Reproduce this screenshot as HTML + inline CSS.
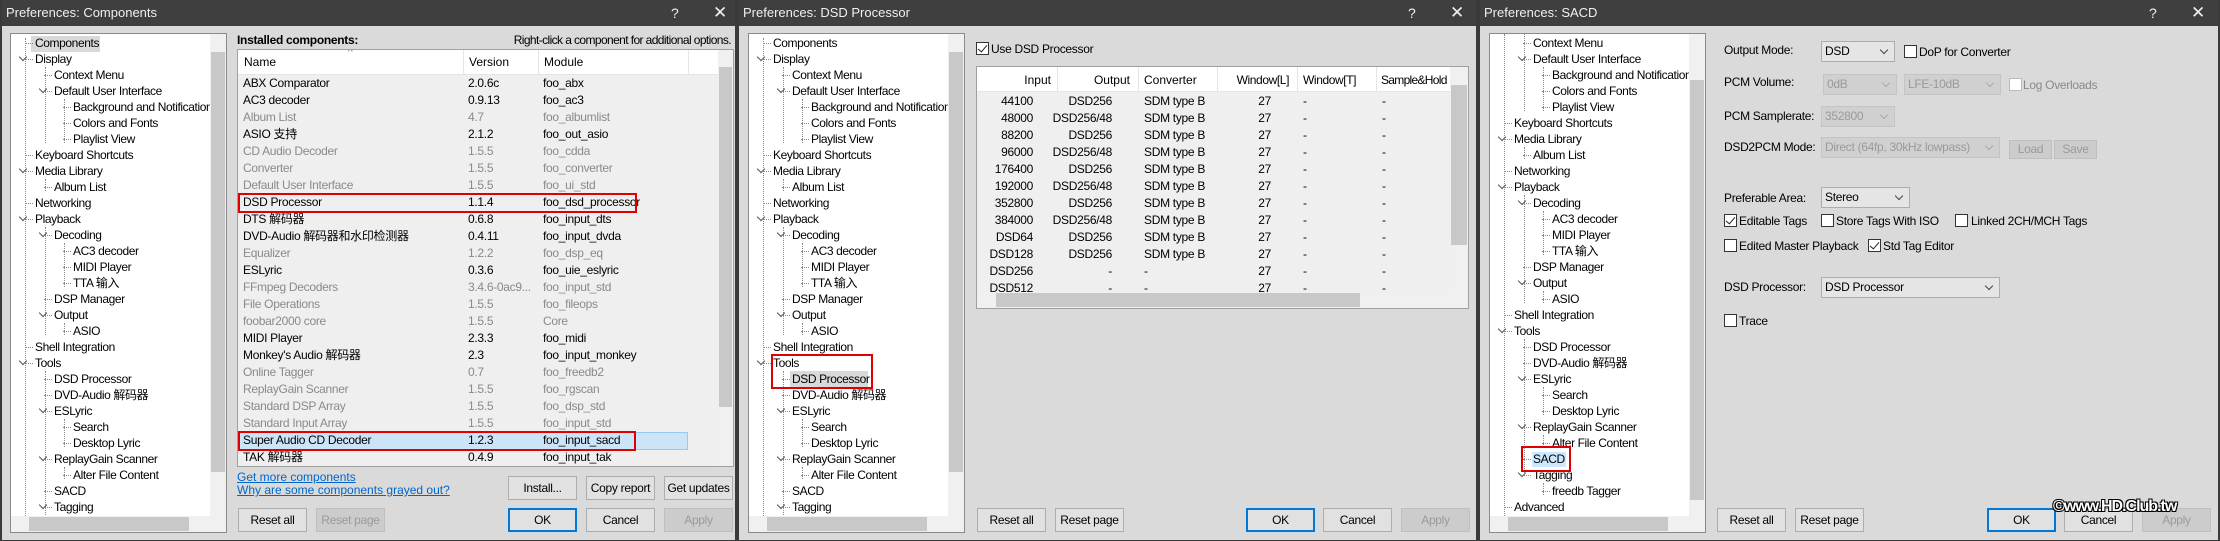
<!DOCTYPE html>
<html><head><meta charset="utf-8"><style>
*{margin:0;padding:0;box-sizing:border-box}
body{width:2220px;height:541px;background:#2b2b2b;position:relative;overflow:hidden;font-family:"Liberation Sans","Noto Sans CJK SC",sans-serif;font-size:12px;color:#000}
.dlg{position:absolute;top:0;height:541px;background:#dadada;overflow:hidden;border-left:2px solid #3a3a3a;border-right:2px solid #3a3a3a;border-bottom:1px solid #3a3a3a}
.tb{position:absolute;left:0;right:0;top:0;height:26px;background:#3f3f3f;color:#f0f0f0;font-size:13px;line-height:26px;padding-left:4px}
.tb .q{position:absolute;top:0;font-size:14px}
.tb .x{position:absolute;top:0;font-size:17px}
.a{position:absolute;white-space:nowrap}
.tree{position:absolute;top:33px;width:217px;height:500px;background:#fff;border:1px solid #8a8a8a;overflow:hidden}
.t{position:absolute;height:16px;line-height:16px;white-space:nowrap;letter-spacing:-.4px}
.t::before{content:"";position:absolute;left:-10px;top:8px;width:8px;border-top:1px dotted #888}
.c{position:absolute;width:6px;height:6px;border-right:1.5px solid #555;border-bottom:1.5px solid #555;transform:rotate(45deg)}
.vl{position:absolute;width:0;border-left:1px dotted #888}
.vs{position:absolute;right:0;top:0;width:16px;height:484px;background:#f0f0f0}
.vs i{position:absolute;left:1px;right:1px;background:#c8c8c8}
.hs{position:absolute;left:0;bottom:0;width:216px;height:16px;background:#f0f0f0}
.hs i{position:absolute;top:1px;bottom:1px;background:#c8c8c8}
.btn{position:absolute;height:24px;background:#e1e1e1;border:1px solid #adadad;text-align:center;line-height:22px;font-size:12px;letter-spacing:-.3px}
.dis{background:#cccccc;border-color:#bfbfbf;color:#9a9a9a}
.ok{border:2px solid #0078d7;line-height:20px}
.list{position:absolute;background:#efefef;border:1px solid #a0a0a0;overflow:hidden}
.hd{position:absolute;left:0;top:0;height:25px;background:#fff;border-bottom:1px solid #e5e5e5}
.sep{position:absolute;top:0;height:25px;border-left:1px solid #e5e5e5}
.r{position:absolute;left:0;height:17px;line-height:17px;white-space:nowrap;letter-spacing:-.3px}
.g{color:#8a8a8a}
.cb{position:absolute;width:13px;height:13px;border:1px solid #333;background:#fff}
.cb.k::after{content:"";position:absolute;left:3px;top:0px;width:4px;height:8px;border-right:1.5px solid #222;border-bottom:1.5px solid #222;transform:rotate(40deg)}
.cmb{position:absolute;height:21px;background:#e5e5e5;border:1px solid #adadad;line-height:19px;padding-left:3px;letter-spacing:-.3px}
.cmb::after{content:"";position:absolute;right:7px;top:5px;width:5px;height:5px;border-right:1px solid #444;border-bottom:1px solid #444;transform:rotate(45deg)}
.cmb.d{background:#d0d0d0;border-color:#c4c4c4;color:#9a9a9a}
.cmb.d::after{border-color:#aaa}
.lnk{color:#0066cc;text-decoration:underline}
</style></head><body>

<!-- ================= DIALOG 1 ================= -->
<div class="dlg" style="left:0;width:737px">
<div class="tb">Preferences: Components<span class="q" style="left:669px">?</span><span class="x" style="left:711px">✕</span></div>
<div class="tree" style="left:8px">
 <div class="vl" style="left:14px;top:4px;height:480px"></div>
 <div class="vl" style="left:34px;top:33px;height:76px"></div>
 <div class="vl" style="left:34px;top:145px;height:12px"></div>
 <div class="vl" style="left:34px;top:193px;height:108px"></div>
 <div class="vl" style="left:34px;top:337px;height:150px"></div>
 <div class="vl" style="left:53px;top:65px;height:44px"></div>
 <div class="vl" style="left:53px;top:209px;height:44px"></div>
 <div class="vl" style="left:53px;top:289px;height:12px"></div>
 <div class="vl" style="left:53px;top:385px;height:28px"></div>
 <div class="vl" style="left:53px;top:433px;height:12px"></div>
 <div style="position:absolute;left:20px;top:2px;width:69px;height:16px;background:#d9d9d9"></div>
 <div class="t" style="top:1px;left:24px">Components</div>
 <div class="c" style="left:9px;top:20px"></div><div class="t" style="top:17px;left:24px">Display</div>
 <div class="t" style="top:33px;left:43px">Context Menu</div>
 <div class="c" style="left:29px;top:52px"></div><div class="t" style="top:49px;left:43px">Default User Interface</div>
 <div class="t" style="top:65px;left:62px">Background and Notifications</div>
 <div class="t" style="top:81px;left:62px">Colors and Fonts</div>
 <div class="t" style="top:97px;left:62px">Playlist View</div>
 <div class="t" style="top:113px;left:24px">Keyboard Shortcuts</div>
 <div class="c" style="left:9px;top:132px"></div><div class="t" style="top:129px;left:24px">Media Library</div>
 <div class="t" style="top:145px;left:43px">Album List</div>
 <div class="t" style="top:161px;left:24px">Networking</div>
 <div class="c" style="left:9px;top:180px"></div><div class="t" style="top:177px;left:24px">Playback</div>
 <div class="c" style="left:29px;top:196px"></div><div class="t" style="top:193px;left:43px">Decoding</div>
 <div class="t" style="top:209px;left:62px">AC3 decoder</div>
 <div class="t" style="top:225px;left:62px">MIDI Player</div>
 <div class="t" style="top:241px;left:62px">TTA 输入</div>
 <div class="t" style="top:257px;left:43px">DSP Manager</div>
 <div class="c" style="left:29px;top:276px"></div><div class="t" style="top:273px;left:43px">Output</div>
 <div class="t" style="top:289px;left:62px">ASIO</div>
 <div class="t" style="top:305px;left:24px">Shell Integration</div>
 <div class="c" style="left:9px;top:324px"></div><div class="t" style="top:321px;left:24px">Tools</div>
 <div class="t" style="top:337px;left:43px">DSD Processor</div>
 <div class="t" style="top:353px;left:43px">DVD-Audio 解码器</div>
 <div class="c" style="left:29px;top:372px"></div><div class="t" style="top:369px;left:43px">ESLyric</div>
 <div class="t" style="top:385px;left:62px">Search</div>
 <div class="t" style="top:401px;left:62px">Desktop Lyric</div>
 <div class="c" style="left:29px;top:420px"></div><div class="t" style="top:417px;left:43px">ReplayGain Scanner</div>
 <div class="t" style="top:433px;left:62px">Alter File Content</div>
 <div class="t" style="top:449px;left:43px">SACD</div>
 <div class="c" style="left:29px;top:468px"></div><div class="t" style="top:465px;left:43px">Tagging</div>
 <div class="vs"><i style="top:18px;height:420px"></i></div>
 <div class="hs"><i style="left:18px;width:160px"></i></div>
</div>

<div class="a" style="left:235px;top:33px;font-weight:bold;letter-spacing:-.3px">Installed components:</div>
<div class="a" style="right:4px;top:33px;letter-spacing:-.6px">Right-click a component for additional options.</div>

<div class="list" style="left:235px;top:49px;width:497px;height:418px">
 <div class="hd" style="width:481px"></div>
 <div class="sep" style="left:225px"></div><div class="sep" style="left:300px"></div><div class="sep" style="left:450px"></div>
 <div class="a" style="left:6px;top:5px">Name</div>
 <div class="a" style="left:110px;top:-3px;font-size:10px;color:#666">^</div>
 <div class="a" style="left:231px;top:5px">Version</div>
 <div class="a" style="left:306px;top:5px">Module</div>
 <div style="position:absolute;left:0;top:382px;width:450px;height:18px;background:#cce4f7;border:1px solid #99c9ef"></div>
 <div style="position:absolute;left:0;top:25px;width:481px;font-size:12px">
  <div class="r" style="top:0"><span class="a" style="left:5px">ABX Comparator</span><span class="a" style="left:230px">2.0.6c</span><span class="a" style="left:305px">foo_abx</span></div>
  <div class="r" style="top:17px"><span class="a" style="left:5px">AC3 decoder</span><span class="a" style="left:230px">0.9.13</span><span class="a" style="left:305px">foo_ac3</span></div>
  <div class="r g" style="top:34px"><span class="a" style="left:5px">Album List</span><span class="a" style="left:230px">4.7</span><span class="a" style="left:305px">foo_albumlist</span></div>
  <div class="r" style="top:51px"><span class="a" style="left:5px">ASIO 支持</span><span class="a" style="left:230px">2.1.2</span><span class="a" style="left:305px">foo_out_asio</span></div>
  <div class="r g" style="top:68px"><span class="a" style="left:5px">CD Audio Decoder</span><span class="a" style="left:230px">1.5.5</span><span class="a" style="left:305px">foo_cdda</span></div>
  <div class="r g" style="top:85px"><span class="a" style="left:5px">Converter</span><span class="a" style="left:230px">1.5.5</span><span class="a" style="left:305px">foo_converter</span></div>
  <div class="r g" style="top:102px"><span class="a" style="left:5px">Default User Interface</span><span class="a" style="left:230px">1.5.5</span><span class="a" style="left:305px">foo_ui_std</span></div>
  <div class="r" style="top:119px"><span class="a" style="left:5px">DSD Processor</span><span class="a" style="left:230px">1.1.4</span><span class="a" style="left:305px">foo_dsd_processor</span></div>
  <div class="r" style="top:136px"><span class="a" style="left:5px">DTS 解码器</span><span class="a" style="left:230px">0.6.8</span><span class="a" style="left:305px">foo_input_dts</span></div>
  <div class="r" style="top:153px"><span class="a" style="left:5px">DVD-Audio 解码器和水印检测器</span><span class="a" style="left:230px">0.4.11</span><span class="a" style="left:305px">foo_input_dvda</span></div>
  <div class="r g" style="top:170px"><span class="a" style="left:5px">Equalizer</span><span class="a" style="left:230px">1.2.2</span><span class="a" style="left:305px">foo_dsp_eq</span></div>
  <div class="r" style="top:187px"><span class="a" style="left:5px">ESLyric</span><span class="a" style="left:230px">0.3.6</span><span class="a" style="left:305px">foo_uie_eslyric</span></div>
  <div class="r g" style="top:204px"><span class="a" style="left:5px">FFmpeg Decoders</span><span class="a" style="left:230px">3.4.6-0ac9...</span><span class="a" style="left:305px">foo_input_std</span></div>
  <div class="r g" style="top:221px"><span class="a" style="left:5px">File Operations</span><span class="a" style="left:230px">1.5.5</span><span class="a" style="left:305px">foo_fileops</span></div>
  <div class="r g" style="top:238px"><span class="a" style="left:5px">foobar2000 core</span><span class="a" style="left:230px">1.5.5</span><span class="a" style="left:305px">Core</span></div>
  <div class="r" style="top:255px"><span class="a" style="left:5px">MIDI Player</span><span class="a" style="left:230px">2.3.3</span><span class="a" style="left:305px">foo_midi</span></div>
  <div class="r" style="top:272px"><span class="a" style="left:5px">Monkey's Audio 解码器</span><span class="a" style="left:230px">2.3</span><span class="a" style="left:305px">foo_input_monkey</span></div>
  <div class="r g" style="top:289px"><span class="a" style="left:5px">Online Tagger</span><span class="a" style="left:230px">0.7</span><span class="a" style="left:305px">foo_freedb2</span></div>
  <div class="r g" style="top:306px"><span class="a" style="left:5px">ReplayGain Scanner</span><span class="a" style="left:230px">1.5.5</span><span class="a" style="left:305px">foo_rgscan</span></div>
  <div class="r g" style="top:323px"><span class="a" style="left:5px">Standard DSP Array</span><span class="a" style="left:230px">1.5.5</span><span class="a" style="left:305px">foo_dsp_std</span></div>
  <div class="r g" style="top:340px"><span class="a" style="left:5px">Standard Input Array</span><span class="a" style="left:230px">1.5.5</span><span class="a" style="left:305px">foo_input_std</span></div>
  <div class="r" style="top:357px"><span class="a" style="left:5px">Super Audio CD Decoder</span><span class="a" style="left:230px">1.2.3</span><span class="a" style="left:305px">foo_input_sacd</span></div>
  <div class="r" style="top:374px"><span class="a" style="left:5px">TAK 解码器</span><span class="a" style="left:230px">0.4.9</span><span class="a" style="left:305px">foo_input_tak</span></div>
 </div>
 <div style="position:absolute;right:0;top:0;width:15px;height:416px;background:#f0f0f0"><i style="position:absolute;left:1px;right:1px;top:17px;height:340px;background:#c8c8c8"></i></div>
</div>
<div style="position:absolute;left:236px;top:193px;width:399px;height:20px;border:2px solid #e00000"></div>
<div style="position:absolute;left:236px;top:431px;width:398px;height:20px;border:2px solid #e00000"></div>

<div class="a lnk" style="left:235px;top:470px">Get more components</div>
<div class="a lnk" style="left:235px;top:483px">Why are some components grayed out?</div>
<div class="btn" style="left:506px;top:476px;width:69px">Install...</div>
<div class="btn" style="left:584px;top:476px;width:69px">Copy report</div>
<div class="btn" style="left:662px;top:476px;width:69px">Get updates</div>
<div class="btn" style="left:236px;top:508px;width:69px">Reset all</div>
<div class="btn dis" style="left:314px;top:508px;width:69px">Reset page</div>
<div class="btn ok" style="left:506px;top:508px;width:69px">OK</div>
<div class="btn" style="left:584px;top:508px;width:69px">Cancel</div>
<div class="btn dis" style="left:662px;top:508px;width:69px">Apply</div>
</div>

<!-- ================= DIALOG 2 ================= -->
<div class="dlg" style="left:737px;width:741px">
<div class="tb">Preferences: DSD Processor<span class="q" style="left:669px">?</span><span class="x" style="left:711px">✕</span></div>
<div class="tree" style="left:9px">
 <div class="vl" style="left:14px;top:4px;height:480px"></div>
 <div class="vl" style="left:34px;top:33px;height:76px"></div>
 <div class="vl" style="left:34px;top:145px;height:12px"></div>
 <div class="vl" style="left:34px;top:193px;height:108px"></div>
 <div class="vl" style="left:34px;top:337px;height:150px"></div>
 <div class="vl" style="left:53px;top:65px;height:44px"></div>
 <div class="vl" style="left:53px;top:209px;height:44px"></div>
 <div class="vl" style="left:53px;top:289px;height:12px"></div>
 <div class="vl" style="left:53px;top:385px;height:28px"></div>
 <div class="vl" style="left:53px;top:433px;height:12px"></div>
 <div style="position:absolute;left:41px;top:337px;width:78px;height:16px;background:#d9d9d9"></div>
 <div class="t" style="top:1px;left:24px">Components</div>
 <div class="c" style="left:9px;top:20px"></div><div class="t" style="top:17px;left:24px">Display</div>
 <div class="t" style="top:33px;left:43px">Context Menu</div>
 <div class="c" style="left:29px;top:52px"></div><div class="t" style="top:49px;left:43px">Default User Interface</div>
 <div class="t" style="top:65px;left:62px">Background and Notifications</div>
 <div class="t" style="top:81px;left:62px">Colors and Fonts</div>
 <div class="t" style="top:97px;left:62px">Playlist View</div>
 <div class="t" style="top:113px;left:24px">Keyboard Shortcuts</div>
 <div class="c" style="left:9px;top:132px"></div><div class="t" style="top:129px;left:24px">Media Library</div>
 <div class="t" style="top:145px;left:43px">Album List</div>
 <div class="t" style="top:161px;left:24px">Networking</div>
 <div class="c" style="left:9px;top:180px"></div><div class="t" style="top:177px;left:24px">Playback</div>
 <div class="c" style="left:29px;top:196px"></div><div class="t" style="top:193px;left:43px">Decoding</div>
 <div class="t" style="top:209px;left:62px">AC3 decoder</div>
 <div class="t" style="top:225px;left:62px">MIDI Player</div>
 <div class="t" style="top:241px;left:62px">TTA 输入</div>
 <div class="t" style="top:257px;left:43px">DSP Manager</div>
 <div class="c" style="left:29px;top:276px"></div><div class="t" style="top:273px;left:43px">Output</div>
 <div class="t" style="top:289px;left:62px">ASIO</div>
 <div class="t" style="top:305px;left:24px">Shell Integration</div>
 <div class="c" style="left:9px;top:324px"></div><div class="t" style="top:321px;left:24px">Tools</div>
 <div class="t" style="top:337px;left:43px">DSD Processor</div>
 <div class="t" style="top:353px;left:43px">DVD-Audio 解码器</div>
 <div class="c" style="left:29px;top:372px"></div><div class="t" style="top:369px;left:43px">ESLyric</div>
 <div class="t" style="top:385px;left:62px">Search</div>
 <div class="t" style="top:401px;left:62px">Desktop Lyric</div>
 <div class="c" style="left:29px;top:420px"></div><div class="t" style="top:417px;left:43px">ReplayGain Scanner</div>
 <div class="t" style="top:433px;left:62px">Alter File Content</div>
 <div class="t" style="top:449px;left:43px">SACD</div>
 <div class="c" style="left:29px;top:468px"></div><div class="t" style="top:465px;left:43px">Tagging</div>
 <div class="vs"><i style="top:18px;height:420px"></i></div>
 <div class="hs"><i style="left:18px;width:160px"></i></div>
</div>
<div style="position:absolute;left:32px;top:354px;width:102px;height:35px;border:2px solid #e00000"></div>

<div class="cb k" style="left:237px;top:42px"></div>
<div class="a" style="left:252px;top:42px;letter-spacing:-.3px">Use DSD Processor</div>

<div class="list" style="left:237px;top:66px;width:493px;height:243px">
 <div class="hd" style="width:474px"></div>
 <div class="sep" style="left:80px"></div><div class="sep" style="left:161px"></div><div class="sep" style="left:240px"></div><div class="sep" style="left:320px"></div><div class="sep" style="left:399px"></div>
 <div class="a" style="right:417px;top:6px">Input</div>
 <div class="a" style="right:338px;top:6px">Output</div>
 <div class="a" style="left:167px;top:6px">Converter</div>
 <div class="a" style="right:179px;top:6px;letter-spacing:-.4px">Window[L]</div>
 <div class="a" style="left:326px;top:6px;letter-spacing:-.4px">Window[T]</div>
 <div class="a" style="left:404px;top:6px;letter-spacing:-.7px">Sample&amp;Hold</div>
 <div style="position:absolute;left:0;top:26px;width:474px;height:199px;overflow:hidden">
  <div class="r" style="top:0;width:474px"><span class="a" style="right:418px">44100</span><span class="a" style="right:339px">DSD256</span><span class="a" style="left:167px">SDM type B</span><span class="a" style="right:180px">27</span><span class="a" style="left:326px">-</span><span class="a" style="left:405px">-</span></div>
  <div class="r" style="top:17px;width:474px"><span class="a" style="right:418px">48000</span><span class="a" style="right:339px">DSD256/48</span><span class="a" style="left:167px">SDM type B</span><span class="a" style="right:180px">27</span><span class="a" style="left:326px">-</span><span class="a" style="left:405px">-</span></div>
  <div class="r" style="top:34px;width:474px"><span class="a" style="right:418px">88200</span><span class="a" style="right:339px">DSD256</span><span class="a" style="left:167px">SDM type B</span><span class="a" style="right:180px">27</span><span class="a" style="left:326px">-</span><span class="a" style="left:405px">-</span></div>
  <div class="r" style="top:51px;width:474px"><span class="a" style="right:418px">96000</span><span class="a" style="right:339px">DSD256/48</span><span class="a" style="left:167px">SDM type B</span><span class="a" style="right:180px">27</span><span class="a" style="left:326px">-</span><span class="a" style="left:405px">-</span></div>
  <div class="r" style="top:68px;width:474px"><span class="a" style="right:418px">176400</span><span class="a" style="right:339px">DSD256</span><span class="a" style="left:167px">SDM type B</span><span class="a" style="right:180px">27</span><span class="a" style="left:326px">-</span><span class="a" style="left:405px">-</span></div>
  <div class="r" style="top:85px;width:474px"><span class="a" style="right:418px">192000</span><span class="a" style="right:339px">DSD256/48</span><span class="a" style="left:167px">SDM type B</span><span class="a" style="right:180px">27</span><span class="a" style="left:326px">-</span><span class="a" style="left:405px">-</span></div>
  <div class="r" style="top:102px;width:474px"><span class="a" style="right:418px">352800</span><span class="a" style="right:339px">DSD256</span><span class="a" style="left:167px">SDM type B</span><span class="a" style="right:180px">27</span><span class="a" style="left:326px">-</span><span class="a" style="left:405px">-</span></div>
  <div class="r" style="top:119px;width:474px"><span class="a" style="right:418px">384000</span><span class="a" style="right:339px">DSD256/48</span><span class="a" style="left:167px">SDM type B</span><span class="a" style="right:180px">27</span><span class="a" style="left:326px">-</span><span class="a" style="left:405px">-</span></div>
  <div class="r" style="top:136px;width:474px"><span class="a" style="right:418px">DSD64</span><span class="a" style="right:339px">DSD256</span><span class="a" style="left:167px">SDM type B</span><span class="a" style="right:180px">27</span><span class="a" style="left:326px">-</span><span class="a" style="left:405px">-</span></div>
  <div class="r" style="top:153px;width:474px"><span class="a" style="right:418px">DSD128</span><span class="a" style="right:339px">DSD256</span><span class="a" style="left:167px">SDM type B</span><span class="a" style="right:180px">27</span><span class="a" style="left:326px">-</span><span class="a" style="left:405px">-</span></div>
  <div class="r" style="top:170px;width:474px"><span class="a" style="right:418px">DSD256</span><span class="a" style="right:339px">-</span><span class="a" style="left:167px">-</span><span class="a" style="right:180px">27</span><span class="a" style="left:326px">-</span><span class="a" style="left:405px">-</span></div>
  <div class="r" style="top:187px;width:474px"><span class="a" style="right:418px">DSD512</span><span class="a" style="right:339px">-</span><span class="a" style="left:167px">-</span><span class="a" style="right:180px">27</span><span class="a" style="left:326px">-</span><span class="a" style="left:405px">-</span></div>
 </div>
 <div style="position:absolute;right:0;top:0;width:18px;height:225px;background:#f0f0f0"><i style="position:absolute;left:1px;right:1px;top:18px;height:160px;background:#c8c8c8"></i></div>
 <div style="position:absolute;left:0;top:225px;width:491px;height:16px;background:#f0f0f0"><i style="position:absolute;top:1px;bottom:1px;left:19px;width:364px;background:#c8c8c8"></i></div>
</div>

<div class="btn" style="left:238px;top:508px;width:69px">Reset all</div>
<div class="btn" style="left:316px;top:508px;width:69px">Reset page</div>
<div class="btn ok" style="left:507px;top:508px;width:69px">OK</div>
<div class="btn" style="left:584px;top:508px;width:69px">Cancel</div>
<div class="btn dis" style="left:662px;top:508px;width:69px">Apply</div>
</div>

<!-- ================= DIALOG 3 ================= -->
<div class="dlg" style="left:1478px;width:742px">
<div class="tb">Preferences: SACD<span class="q" style="left:669px">?</span><span class="x" style="left:711px">✕</span></div>
<div class="tree" style="left:9px">
 <div class="vl" style="left:14px;top:0;height:484px"></div>
 <div class="vl" style="left:34px;top:0;height:77px"></div>
 <div class="vl" style="left:34px;top:113px;height:12px"></div>
 <div class="vl" style="left:34px;top:161px;height:108px"></div>
 <div class="vl" style="left:34px;top:305px;height:134px"></div>
 <div class="vl" style="left:53px;top:33px;height:44px"></div>
 <div class="vl" style="left:53px;top:177px;height:44px"></div>
 <div class="vl" style="left:53px;top:257px;height:12px"></div>
 <div class="vl" style="left:53px;top:353px;height:28px"></div>
 <div class="vl" style="left:53px;top:401px;height:12px"></div>
 <div class="vl" style="left:53px;top:449px;height:12px"></div>
 <div style="position:absolute;left:42px;top:418px;width:34px;height:15px;background:#cce8ff"></div>
 <div class="t" style="top:1px;left:43px">Context Menu</div>
 <div class="c" style="left:29px;top:20px"></div><div class="t" style="top:17px;left:43px">Default User Interface</div>
 <div class="t" style="top:33px;left:62px">Background and Notifications</div>
 <div class="t" style="top:49px;left:62px">Colors and Fonts</div>
 <div class="t" style="top:65px;left:62px">Playlist View</div>
 <div class="t" style="top:81px;left:24px">Keyboard Shortcuts</div>
 <div class="c" style="left:9px;top:100px"></div><div class="t" style="top:97px;left:24px">Media Library</div>
 <div class="t" style="top:113px;left:43px">Album List</div>
 <div class="t" style="top:129px;left:24px">Networking</div>
 <div class="c" style="left:9px;top:148px"></div><div class="t" style="top:145px;left:24px">Playback</div>
 <div class="c" style="left:29px;top:164px"></div><div class="t" style="top:161px;left:43px">Decoding</div>
 <div class="t" style="top:177px;left:62px">AC3 decoder</div>
 <div class="t" style="top:193px;left:62px">MIDI Player</div>
 <div class="t" style="top:209px;left:62px">TTA 输入</div>
 <div class="t" style="top:225px;left:43px">DSP Manager</div>
 <div class="c" style="left:29px;top:244px"></div><div class="t" style="top:241px;left:43px">Output</div>
 <div class="t" style="top:257px;left:62px">ASIO</div>
 <div class="t" style="top:273px;left:24px">Shell Integration</div>
 <div class="c" style="left:9px;top:292px"></div><div class="t" style="top:289px;left:24px">Tools</div>
 <div class="t" style="top:305px;left:43px">DSD Processor</div>
 <div class="t" style="top:321px;left:43px">DVD-Audio 解码器</div>
 <div class="c" style="left:29px;top:340px"></div><div class="t" style="top:337px;left:43px">ESLyric</div>
 <div class="t" style="top:353px;left:62px">Search</div>
 <div class="t" style="top:369px;left:62px">Desktop Lyric</div>
 <div class="c" style="left:29px;top:388px"></div><div class="t" style="top:385px;left:43px">ReplayGain Scanner</div>
 <div class="t" style="top:401px;left:62px">Alter File Content</div>
 <div class="t" style="top:417px;left:43px">SACD</div>
 <div class="c" style="left:29px;top:436px"></div><div class="t" style="top:433px;left:43px">Tagging</div>
 <div class="t" style="top:449px;left:62px">freedb Tagger</div>
 <div class="t" style="top:465px;left:24px">Advanced</div>
 <div class="vs"><i style="top:46px;height:420px"></i></div>
 <div class="hs"><i style="left:18px;width:160px"></i></div>
</div>
<div style="position:absolute;left:41px;top:446px;width:50px;height:26px;border:2px solid #e00000"></div>

<div class="a" style="left:244px;top:43px;letter-spacing:-.3px">Output Mode:</div>
<div class="cmb" style="left:341px;top:41px;width:74px">DSD</div>
<div class="cb" style="left:424px;top:45px"></div><div class="a" style="left:439px;top:45px;letter-spacing:-.3px">DoP for Converter</div>

<div class="a" style="left:244px;top:75px;letter-spacing:-.3px">PCM Volume:</div>
<div class="cmb d" style="left:343px;top:74px;width:74px">0dB</div>
<div class="cmb d" style="left:424px;top:74px;width:97px">LFE-10dB</div>
<div class="cb" style="left:529px;top:78px;border-color:#bbb"></div><div class="a g" style="left:543px;top:78px;letter-spacing:-.3px">Log Overloads</div>

<div class="a" style="left:244px;top:109px;letter-spacing:-.3px">PCM Samplerate:</div>
<div class="cmb d" style="left:341px;top:106px;width:74px">352800</div>

<div class="a" style="left:244px;top:140px;letter-spacing:-.3px">DSD2PCM Mode:</div>
<div class="cmb d" style="left:341px;top:137px;width:179px">Direct (64fp, 30kHz lowpass)</div>
<div class="btn dis" style="left:529px;top:140px;width:43px;height:19px;line-height:17px">Load</div>
<div class="btn dis" style="left:574px;top:140px;width:43px;height:19px;line-height:17px">Save</div>

<div class="a" style="left:244px;top:191px;letter-spacing:-.3px">Preferable Area:</div>
<div class="cmb" style="left:341px;top:187px;width:89px">Stereo</div>

<div class="cb k" style="left:244px;top:214px"></div><div class="a" style="left:259px;top:214px;letter-spacing:-.3px">Editable Tags</div>
<div class="cb" style="left:341px;top:214px"></div><div class="a" style="left:356px;top:214px;letter-spacing:-.3px">Store Tags With ISO</div>
<div class="cb" style="left:475px;top:214px"></div><div class="a" style="left:491px;top:214px;letter-spacing:-.3px">Linked 2CH/MCH Tags</div>

<div class="cb" style="left:244px;top:239px"></div><div class="a" style="left:259px;top:239px;letter-spacing:-.3px">Edited Master Playback</div>
<div class="cb k" style="left:388px;top:239px"></div><div class="a" style="left:403px;top:239px;letter-spacing:-.3px">Std Tag Editor</div>

<div class="a" style="left:244px;top:280px;letter-spacing:-.3px">DSD Processor:</div>
<div class="cmb" style="left:341px;top:277px;width:179px">DSD Processor</div>

<div class="cb" style="left:244px;top:314px"></div><div class="a" style="left:259px;top:314px;letter-spacing:-.3px">Trace</div>

<div class="btn" style="left:237px;top:508px;width:69px">Reset all</div>
<div class="btn" style="left:315px;top:508px;width:69px">Reset page</div>
<div class="btn ok" style="left:507px;top:508px;width:69px">OK</div>
<div class="btn" style="left:584px;top:508px;width:69px">Cancel</div>
<div class="btn dis" style="left:662px;top:508px;width:69px">Apply</div>
<div class="a" style="left:573px;top:498px;font-size:16px;font-weight:bold;color:#fff;letter-spacing:-1px;text-shadow:-1px -1px 0 #000,1px -1px 0 #000,-1px 1px 0 #000,1px 1px 0 #000">©www.HD.Club.tw</div>
</div>

</body></html>
